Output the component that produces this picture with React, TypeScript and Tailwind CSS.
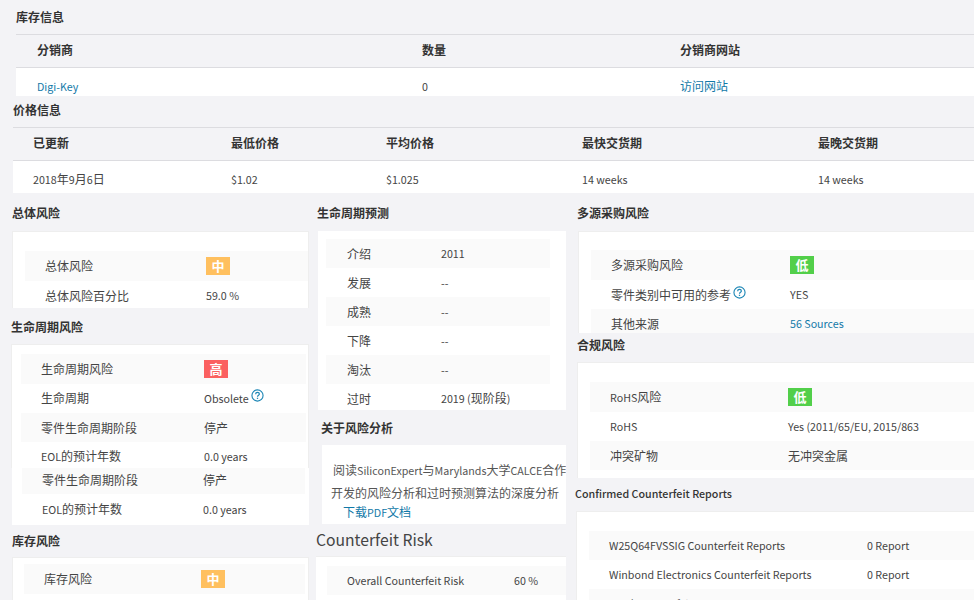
import type { ReactNode } from 'react';

const linkColor = 'text-[#1279a8]';

// latin runs are set a bit smaller, the CJK font has oversized latin glyphs
function Mix({ text }: { text: string }) {
  return (
    <>
      {text.split(/([\u0000-\u024f]+)/).map((part, i) =>
        i % 2 === 1 ? (
          <span key={i} className="text-[10.7px]">
            {part}
          </span>
        ) : (
          part
        ),
      )}
    </>
  );
}

function show(node: ReactNode) {
  return typeof node === 'string' ? <Mix text={node} /> : node;
}

function Help() {
  return (
    <svg viewBox="0 0 14 14" className="ml-[2px] inline-block h-[13px] w-[13px] align-[1px]" fill="none" stroke="#1c86b5">
      <circle cx="7" cy="7" r="6" strokeWidth="1.2" />
      <path d="M5 5.6c0-1.1.9-1.9 2-1.9s2 .8 2 1.7c0 1.5-2 1.4-2 3" strokeWidth="1.3" />
      <path d="M7 9.4v1.3" strokeWidth="1.4" />
    </svg>
  );
}

function Badge({ level }: { level: '高' | '中' | '低' }) {
  const color = level === '高' ? 'bg-[#fb6060]' : level === '中' ? 'bg-[#ffc05f]' : 'bg-[#52cf4a]';
  return (
    <span className={`flex h-[18px] w-6 items-center justify-center text-[13px] font-bold text-white ${color}`}>
      {level}
    </span>
  );
}

function Row({
  label,
  value,
  striped,
  pad,
  labelWidth,
  height = 'h-[29px]',
}: {
  label: ReactNode;
  value: ReactNode;
  striped?: boolean;
  pad: string;
  labelWidth: string;
  height?: string;
}) {
  return (
    <div className={`flex shrink-0 items-center ${height} ${pad} ${striped ? 'bg-[#fafafa]' : ''}`}>
      <div className={`shrink-0 text-[#444] ${labelWidth}`}>{show(label)}</div>
      <div className="whitespace-nowrap text-[#444]">{show(value)}</div>
    </div>
  );
}

function Heading({ children, className }: { children: ReactNode; className: string }) {
  return <h3 className={`font-bold text-[#333] ${className}`}>{children}</h3>;
}

function TableSection({
  title,
  headingClass,
  tablePad,
  height,
  cols,
  head,
  body,
}: {
  title: string;
  headingClass: string;
  tablePad: string;
  height: string;
  cols: string[];
  head: string[];
  body: ReactNode[];
}) {
  return (
    <section className={`overflow-hidden ${height} ${tablePad}`}>
      <Heading className={`flex items-center ${headingClass}`}>{title}</Heading>
      <div className="flex h-[34px] items-center border-y border-[#dcdce0] pb-[2px] font-bold text-[#333]">
        {head.map((h, i) => (
          <div key={h} className={`shrink-0 ${cols[i]}`}>
            {h}
          </div>
        ))}
      </div>
      <div className="flex h-[33px] items-center bg-white pt-[3px] text-[#444]">
        {body.map((b, i) => (
          <div key={i} className={`shrink-0 ${cols[i]}`}>
            {show(b)}
          </div>
        ))}
      </div>
    </section>
  );
}

export default function App() {
  return (
    <div
      className="h-[600px] w-[974px] overflow-hidden bg-[#f3f3f6] text-xs"
      style={{ fontFamily: '"Noto Sans CJK SC", sans-serif' }}
    >
      <TableSection
        title="库存信息"
        headingClass="h-[34px]"
        tablePad="pl-4"
        height="h-[96px]"
        cols={['w-[406px] pl-[21px]', 'w-[258px]', 'w-[200px]']}
        head={['分销商', '数量', '分销商网站']}
        body={[
          <span className={`text-[10.7px] ${linkColor}`}>Digi-Key</span>,
          '0',
          <span className={linkColor}>访问网站</span>,
        ]}
      />
      <TableSection
        title="价格信息"
        headingClass="h-[31px] pb-[4px]"
        tablePad="pl-[13px]"
        height="h-[97px]"
        cols={['w-[218px] pl-5', 'w-[155px]', 'w-[196px]', 'w-[236px]', 'w-[120px]']}
        head={['已更新', '最低价格', '平均价格', '最快交货期', '最晚交货期']}
        body={['2018年9月6日', '$1.02', '$1.025', '14 weeks', '14 weeks']}
      />

      <div className="flex">
        {/* left column */}
        <div className="ml-[11px] w-[298px] shrink-0">
          <Heading className="flex h-[38px] items-center pl-px pt-px">总体风险</Heading>
          <div className="ml-px h-[77px] overflow-hidden border-x border-t border-[#eeeeee] bg-white pl-3 pt-[19px]">
            <Row striped label="总体风险" value={<Badge level="中" />} pad="pl-5" labelWidth="w-[161px]" height="h-[30px]" />
            <Row label="总体风险百分比" value="59.0 %" pad="pl-5" labelWidth="w-[161px]" />
          </div>

          <Heading className="flex h-[36px] items-center pt-px">生命周期风险</Heading>
          <div className="h-[124px] overflow-hidden border-x border-t border-[#eeeeee] bg-white pl-[9px] pr-[2px] pt-[9px]">
            <Row striped label="生命周期风险" value={<Badge level="高" />} pad="pl-5" labelWidth="w-[163px]" height="h-[30px]" />
            <Row label="生命周期" value={<><Mix text="Obsolete" /><Help /></>} pad="pl-5 pb-[2px]" labelWidth="w-[163px]" />
            <Row striped label="零件生命周期阶段" value="停产" pad="pl-5" labelWidth="w-[163px]" />
            <Row label="EOL的预计年数" value="0.0 years" pad="pl-5" labelWidth="w-[163px]" />
          </div>
          <div className="ml-px h-[57px] overflow-hidden bg-white pl-[10px] pr-1">
            <Row striped label="零件生命周期阶段" value="停产" pad="pl-5 pb-[3px]" labelWidth="w-[161px]" height="h-[26px]" />
            <Row label="EOL的预计年数" value="0.0 years" pad="pl-5" labelWidth="w-[161px]" height="h-[31px]" />
          </div>

          <Heading className="flex h-[32px] items-center pl-px">库存风险</Heading>
          <div className="ml-px h-[60px] border-x border-t border-[#eeeeee] bg-white pl-[11px] pr-[3px] pt-[6px]">
            <Row striped label="库存风险" value={<Badge level="中" />} pad="pl-5" labelWidth="w-[157px]" height="h-[30px]" />
          </div>
        </div>

        {/* middle column */}
        <div className="ml-2 w-[249px] shrink-0">
          <Heading className="flex h-[38px] items-center pt-px">生命周期预测</Heading>
          <div className="ml-px h-[179px] overflow-hidden bg-white pl-2 pr-4 pt-2">
            <Row striped label="介绍" value="2011" pad="pl-[21px]" labelWidth="w-[94px]" />
            <Row label="发展" value="--" pad="pl-[21px]" labelWidth="w-[94px]" />
            <Row striped label="成熟" value="--" pad="pl-[21px]" labelWidth="w-[94px]" />
            <Row label="下降" value="--" pad="pl-[21px]" labelWidth="w-[94px]" />
            <Row striped label="淘汰" value="--" pad="pl-[21px]" labelWidth="w-[94px]" />
            <Row label="过时" value="2019 (现阶段)" pad="pl-[21px]" labelWidth="w-[94px]" />
          </div>

          <Heading className="flex h-[35px] items-center pl-1">关于风险分析</Heading>
          <div className="ml-[5px] h-[79px] overflow-hidden bg-white text-[#555]">
            <p className="mt-[15px] whitespace-nowrap pl-[11px] leading-5"><Mix text="阅读SiliconExpert与Marylands大学CALCE合作" /></p>
            <p className="mt-[2px] whitespace-nowrap pl-[9px] leading-5">开发的风险分析和过时预测算法的深度分析</p>
            <p className={`whitespace-nowrap pl-[21px] leading-[18px] ${linkColor}`}><Mix text="下载PDF文档" /></p>
          </div>

          <h3 className="-ml-px flex h-[32px] items-center text-[15.7px] text-[#444]">Counterfeit Risk</h3>
          <div className="-ml-px h-[60px] overflow-hidden border-t border-[#eeeeee] bg-white pl-[11px] pt-[9px]">
            <Row striped label="Overall Counterfeit Risk" value="60 %" pad="pl-5" labelWidth="w-[167px]" />
          </div>
        </div>

        {/* right column */}
        <div className="ml-[11px] min-w-0 flex-1">
          <Heading className="flex h-[38px] items-center pt-px">多源采购风险</Heading>
          <div className="ml-px h-[102px] overflow-hidden border-l border-t border-[#eeeeee] bg-white pl-3 pt-[18px]">
            <Row striped label="多源采购风险" value={<Badge level="低" />} pad="pl-5" labelWidth="w-[179px]" height="h-[30px]" />
            <Row label={<>零件类别中可用的参考<Help /></>} value="YES" pad="pl-5" labelWidth="w-[179px]" />
            <Row striped label="其他来源" value={<span className={`text-[10.7px] ${linkColor}`}>56 Sources</span>} pad="pl-5" labelWidth="w-[179px]" />
          </div>

          <Heading className="flex h-[29px] items-center pb-[6px]">合规风险</Heading>
          <div className="h-[116px] overflow-hidden border-l border-t border-[#eeeeee] bg-white pl-3 pt-[19px]">
            <Row striped label="RoHS风险" value={<Badge level="低" />} pad="pl-5" labelWidth="w-[178px]" height="h-[30px]" />
            <Row label="RoHS" value="Yes (2011/65/EU, 2015/863" pad="pl-5" labelWidth="w-[178px]" />
            <Row striped label="冲突矿物" value="无冲突金属" pad="pl-5" labelWidth="w-[178px]" />
          </div>

          <h3 className="-ml-0.5 flex h-[33px] items-center text-[10.7px] font-medium text-[#333]">Confirmed Counterfeit Reports</h3>
          <div className="-ml-px h-[89px] overflow-hidden border-l border-t border-[#eeeeee] bg-white pl-3 pt-[19px]">
            <Row striped label="W25Q64FVSSIG Counterfeit Reports" value="0 Report" pad="pl-5" labelWidth="w-[258px]" />
            <Row label="Winbond Electronics Counterfeit Reports" value="0 Report" pad="pl-5" labelWidth="w-[258px]" />
            <Row striped label="Total Counterfeit Reports" value="0 Report" pad="pl-5" labelWidth="w-[258px]" />
          </div>
        </div>
      </div>
    </div>
  );
}
